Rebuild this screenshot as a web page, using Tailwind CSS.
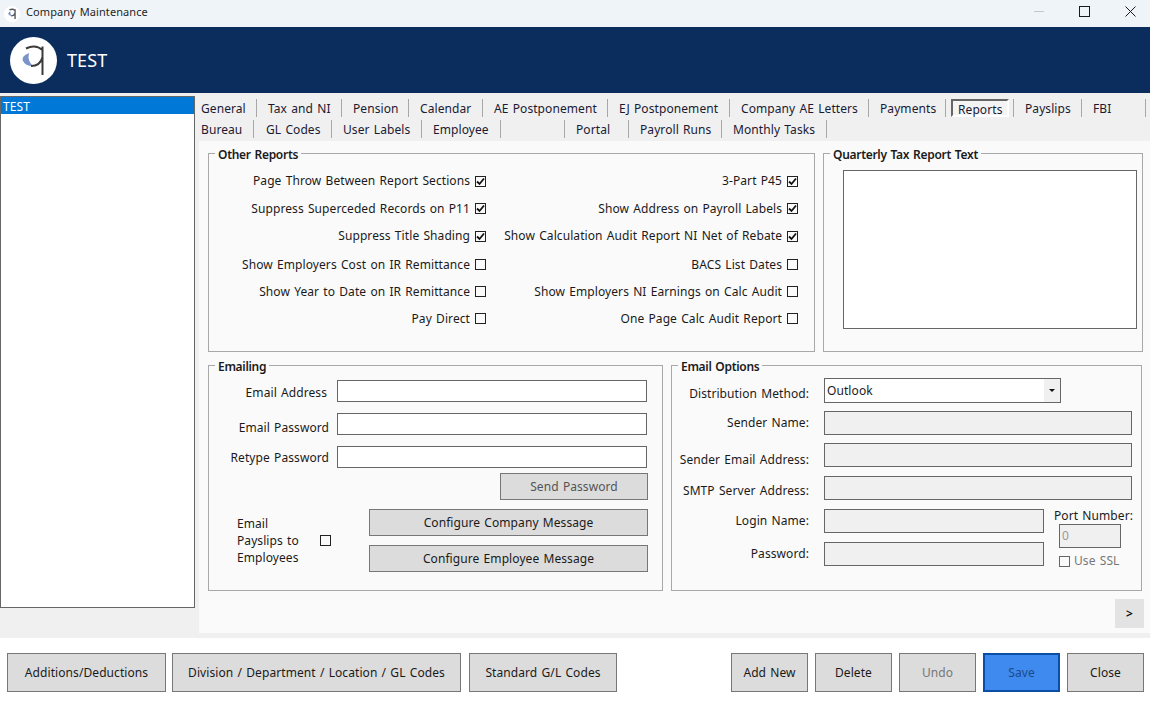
<!DOCTYPE html>
<html>
<head>
<meta charset="utf-8">
<title>Company Maintenance</title>
<script src="https://cdn.jsdelivr.net/npm/@tailwindcss/browser@4"></script>
</head>
<body class="w-[1150px] h-[706px] overflow-hidden bg-white font-['Noto_Sans',sans-serif] text-[12px] tracking-[0.08px] [word-spacing:1px] text-[#1a1a1a]">

<!-- title bar -->
<div class="h-[27px] bg-[#eff4f9] flex items-center">
  <svg class="ml-[4px] w-[16px] h-[16px]" viewBox="0 0 47 47">
    <circle cx="23.5" cy="23.5" r="23.5" fill="#fff"/>
    <path d="M19 16 Q11 19 13 24 Q15 29 23 29 Q17 24 19 16Z" fill="#7b93c8"/>
    <path d="M16 11.5 C22 8.5 28 9 32.5 13 M32.5 9.5 V38 M32.5 20 C31 26 27 29 21 29" fill="none" stroke="#55565c" stroke-width="4"/>
  </svg>
  <span class="ml-[6px] pb-[2px] text-[11px] text-[#1f1f1f]">Company Maintenance</span>
  <div class="ml-auto pb-[5px] flex items-center">
    <div class="w-[10px] h-px bg-[#c4c8cc] mr-[35px]"></div>
    <div class="w-[11px] h-[11px] border border-[#1a1a1a] mr-[35px]"></div>
    <svg class="w-[11px] h-[11px] mr-[14px]" viewBox="0 0 11 11"><path d="M0.5 0.5 L10.5 10.5 M10.5 0.5 L0.5 10.5" stroke="#1a1a1a" fill="none"/></svg>
  </div>
</div>

<!-- header -->
<div class="h-[66px] bg-[#0a2d5e] flex items-center">
  <svg class="ml-[10px] w-[47px] h-[47px]" viewBox="0 0 47 47">
    <circle cx="23.5" cy="23.5" r="23.5" fill="#fff"/>
    <path d="M19 16 Q11 19 13 24 Q15 29 23 29 Q17 24 19 16Z" fill="#7b93c8"/>
    <path d="M16 11.5 C22 8.5 28 9 32.5 13 M32.5 9.5 V38 M32.5 20 C31 26 27 29 21 29" fill="none" stroke="#3d3a3a" stroke-width="2"/>
  </svg>
  <span class="ml-[10px] text-[18px] text-white">TEST</span>
</div>

<!-- main -->
<div class="h-[545px] bg-[#f0f0f0] flex">
  <div class="w-[195px] h-[512px] mt-[3px] bg-white border border-[#666]">
    <div class="h-[17px] leading-[19px] bg-[#0078d7] text-white pl-[2px]">TEST</div>
  </div>

  <div class="ml-[4px] w-[951px]">
    <!-- tabs -->
    <div class="h-[48px] pt-[6px] text-[#1a1a33]">
      <div class="flex h-[21px]">
        <div class="w-[58px] h-[18px] leading-[19px] pl-[2px] border-r border-[#a8a8a8]">General</div>
        <div class="w-[85px] h-[18px] leading-[19px] pl-[11px] border-r border-[#a8a8a8]">Tax and NI</div>
        <div class="w-[67px] h-[18px] leading-[19px] pl-[11px] border-r border-[#a8a8a8]">Pension</div>
        <div class="w-[74px] h-[18px] leading-[19px] pl-[11px] border-r border-[#a8a8a8]">Calendar</div>
        <div class="w-[125px] h-[18px] leading-[19px] pl-[11px] border-r border-[#a8a8a8]">AE Postponement</div>
        <div class="w-[122px] h-[18px] leading-[19px] pl-[11px] border-r border-[#a8a8a8]">EJ Postponement</div>
        <div class="w-[139px] h-[18px] leading-[19px] pl-[11px] border-r border-[#a8a8a8]">Company AE Letters</div>
        <div class="w-[77px] h-[18px] leading-[19px] pl-[11px] border-r border-[#a8a8a8]">Payments</div>
        <div class="w-[68px] h-[18px] pl-[5px] border-r border-[#a8a8a8]">
          <div class="w-[58px] h-[18px] leading-[17px] pl-[5px] border-2 border-t-[#666] border-l-[#666] border-r-white border-b-white bg-[#f4f4f4]">Reports</div>
        </div>
        <div class="w-[68px] h-[18px] leading-[19px] pl-[11px] border-r border-[#a8a8a8]">Payslips</div>
        <div class="w-[64px] h-[18px] leading-[19px] pl-[11px] border-r border-[#a8a8a8]">FBI</div>
      </div>
      <div class="flex">
        <div class="w-[55px] h-[18px] leading-[19px] pl-[2px] border-r border-[#a8a8a8]">Bureau</div>
        <div class="w-[78px] h-[18px] leading-[19px] pl-[12px] border-r border-[#a8a8a8]">GL Codes</div>
        <div class="w-[90px] h-[18px] leading-[19px] pl-[11px] border-r border-[#a8a8a8]">User Labels</div>
        <div class="w-[79px] h-[18px] leading-[19px] pl-[11px] border-r border-[#a8a8a8]">Employee</div>
        <div class="w-[64px] h-[18px] border-r border-[#a8a8a8]"></div>
        <div class="w-[64px] h-[18px] leading-[19px] pl-[11px] border-r border-[#a8a8a8]">Portal</div>
        <div class="w-[93px] h-[18px] leading-[19px] pl-[11px] border-r border-[#a8a8a8]">Payroll Runs</div>
        <div class="w-[105px] h-[18px] leading-[19px] pl-[11px] border-r border-[#a8a8a8]">Monthly Tasks</div>
      </div>
    </div>

    <!-- panel -->
    <div class="h-[492px] bg-[#fafafa] pl-[9px] pt-[12px] relative">
      <div class="flex">
        <!-- other reports -->
        <div class="relative w-[607px] h-[199px] border border-[#a8a8a8] flex pt-[13px]">
          <div class="absolute left-[6px] top-[-7px] px-[3px] bg-[#fafafa] font-semibold leading-[16px] tracking-[-0.3px]">Other Reports</div>
          <div class="w-[277px] flex flex-col items-end">
            <div class="flex items-center h-[28px] gap-[5px]">Page Throw Between Report Sections<span class="w-[11px] h-[11px] border border-[#222] flex items-center justify-center"><svg class="w-[9px] h-[9px]" viewBox="0 0 9 9"><path d="M1 4.5 L3.5 7 L8 1.5" fill="none" stroke="#111" stroke-width="1.8"/></svg></span></div>
            <div class="flex items-center h-[27px] gap-[5px]">Suppress Superceded Records on P11<span class="w-[11px] h-[11px] border border-[#222] flex items-center justify-center"><svg class="w-[9px] h-[9px]" viewBox="0 0 9 9"><path d="M1 4.5 L3.5 7 L8 1.5" fill="none" stroke="#111" stroke-width="1.8"/></svg></span></div>
            <div class="flex items-center h-[29px] pb-[1px] gap-[5px]">Suppress Title Shading<span class="w-[11px] h-[11px] border border-[#222] flex items-center justify-center"><svg class="w-[9px] h-[9px]" viewBox="0 0 9 9"><path d="M1 4.5 L3.5 7 L8 1.5" fill="none" stroke="#111" stroke-width="1.8"/></svg></span></div>
            <div class="flex items-center h-[27px] gap-[5px]">Show Employers Cost on IR Remittance<span class="w-[11px] h-[11px] border border-[#222]"></span></div>
            <div class="flex items-center h-[27px] gap-[5px]">Show Year to Date on IR Remittance<span class="w-[11px] h-[11px] border border-[#222]"></span></div>
            <div class="flex items-center h-[27px] gap-[5px]">Pay Direct<span class="w-[11px] h-[11px] border border-[#222]"></span></div>
          </div>
          <div class="w-[312px] flex flex-col items-end">
            <div class="flex items-center h-[28px] gap-[5px]">3-Part P45<span class="w-[11px] h-[11px] border border-[#222] flex items-center justify-center"><svg class="w-[9px] h-[9px]" viewBox="0 0 9 9"><path d="M1 4.5 L3.5 7 L8 1.5" fill="none" stroke="#111" stroke-width="1.8"/></svg></span></div>
            <div class="flex items-center h-[27px] gap-[5px]">Show Address on Payroll Labels<span class="w-[11px] h-[11px] border border-[#222] flex items-center justify-center"><svg class="w-[9px] h-[9px]" viewBox="0 0 9 9"><path d="M1 4.5 L3.5 7 L8 1.5" fill="none" stroke="#111" stroke-width="1.8"/></svg></span></div>
            <div class="flex items-center h-[29px] pb-[1px] gap-[5px]">Show Calculation Audit Report NI Net of Rebate<span class="w-[11px] h-[11px] border border-[#222] flex items-center justify-center"><svg class="w-[9px] h-[9px]" viewBox="0 0 9 9"><path d="M1 4.5 L3.5 7 L8 1.5" fill="none" stroke="#111" stroke-width="1.8"/></svg></span></div>
            <div class="flex items-center h-[27px] gap-[5px]">BACS List Dates<span class="w-[11px] h-[11px] border border-[#222]"></span></div>
            <div class="flex items-center h-[27px] gap-[5px]">Show Employers NI Earnings on Calc Audit<span class="w-[11px] h-[11px] border border-[#222]"></span></div>
            <div class="flex items-center h-[27px] gap-[5px]">One Page Calc Audit Report<span class="w-[11px] h-[11px] border border-[#222]"></span></div>
          </div>
        </div>
        <!-- quarterly -->
        <div class="relative ml-[8px] w-[320px] h-[199px] border border-[#a8a8a8] pl-[19px] pt-[16px]">
          <div class="absolute left-[6px] top-[-7px] px-[3px] bg-[#fafafa] font-semibold leading-[16px] tracking-[-0.3px]">Quarterly Tax Report Text</div>
          <div class="w-[294px] h-[159px] bg-white border border-[#666]"></div>
        </div>
      </div>

      <div class="flex mt-[13px]">
        <!-- emailing -->
        <div class="relative w-[455px] h-[226px] border border-[#a8a8a8]">
          <div class="absolute left-[6px] top-[-7px] px-[3px] bg-[#fafafa] font-semibold leading-[16px] tracking-[-0.3px]">Emailing</div>
          <div class="flex flex-col items-end pr-[15px] pt-[14px]">
            <div class="flex items-center h-[22px]"><span class="mr-[10px] pt-[4px]">Email Address</span><div class="w-[310px] h-[22px] bg-white border border-[#666]"></div></div>
            <div class="flex items-center h-[22px] mt-[11px]"><span class="mr-[8px] pt-[8px]">Email Password</span><div class="w-[310px] h-[22px] bg-white border border-[#666]"></div></div>
            <div class="flex items-center h-[22px] mt-[11px]"><span class="mr-[8px] pt-[2px]">Retype Password</span><div class="w-[310px] h-[22px] bg-white border border-[#666]"></div></div>
            <div class="w-[148px] h-[27px] mt-[5px] mr-[-1px] leading-[25px] text-center text-[#555] bg-[#dcdcdc] border border-[#777]">Send Password</div>
          </div>
          <div class="flex mt-[9px]">
            <div class="ml-[28px] w-[70px] leading-[17px] mt-[6px]">Email<br>Payslips to<br>Employees</div>
            <div class="w-[11px] h-[11px] border border-[#222] ml-[13px] mt-[26px]"></div>
            <div class="ml-[38px]">
              <div class="w-[279px] h-[27px] leading-[25px] text-center bg-[#dcdcdc] border border-[#777]">Configure Company Message</div>
              <div class="w-[279px] h-[27px] leading-[25px] text-center bg-[#dcdcdc] border border-[#777] mt-[9px]">Configure Employee Message</div>
            </div>
          </div>
        </div>
        <!-- email options -->
        <div class="relative ml-[8px] w-[471px] h-[226px] border border-[#a8a8a8]">
          <div class="absolute left-[6px] top-[-7px] px-[3px] bg-[#fafafa] font-semibold leading-[16px] tracking-[-0.3px]">Email Options</div>
          <div class="pt-[12px]">
            <div class="flex items-center h-[25px]">
              <div class="w-[137px] text-right pt-[6px]">Distribution Method:</div>
              <div class="ml-[15px] w-[237px] h-[25px] bg-white border border-[#666] flex items-center pl-[2px]">Outlook
                <div class="ml-auto w-[16px] h-[23px] bg-[#f0f0f0] flex items-center justify-center"><div class="border-x-[3px] border-x-transparent border-t-[3px] border-t-[#111]"></div></div>
              </div>
            </div>
            <div class="flex items-center h-[24px] mt-[8px]">
              <div class="w-[137px] text-right">Sender Name:</div>
              <div class="ml-[15px] w-[308px] h-[24px] bg-[#f0f0f0] border border-[#666]"></div>
            </div>
            <div class="flex items-center h-[24px] mt-[8px]">
              <div class="w-[137px] text-right pt-[10px]">Sender Email Address:</div>
              <div class="ml-[15px] w-[308px] h-[24px] bg-[#f0f0f0] border border-[#666]"></div>
            </div>
            <div class="flex items-center h-[24px] mt-[9px]">
              <div class="w-[137px] text-right pt-[6px]">SMTP Server Address:</div>
              <div class="ml-[15px] w-[308px] h-[24px] bg-[#f0f0f0] border border-[#666]"></div>
            </div>
            <div class="flex mt-[9px]">
              <div class="w-[372px]">
                <div class="flex items-center h-[24px]">
                  <div class="w-[137px] text-right">Login Name:</div>
                  <div class="ml-[15px] w-[220px] h-[24px] bg-[#f0f0f0] border border-[#666]"></div>
                </div>
                <div class="flex items-center h-[24px] mt-[9px]">
                  <div class="w-[137px] text-right">Password:</div>
                  <div class="ml-[15px] w-[220px] h-[24px] bg-[#f0f0f0] border border-[#666]"></div>
                </div>
              </div>
              <div class="ml-[10px] mt-[-1px]">
                <div class="h-[16px] leading-[16px]">Port Number:</div>
                <div class="ml-[5px] w-[62px] h-[24px] leading-[22px] pl-[2px] text-[#999] bg-[#f0f0f0] border border-[#666]">0</div>
                <div class="ml-[5px] mt-[5px] h-[16px] flex items-center gap-[4px] text-[#777]"><span class="w-[11px] h-[11px] border border-[#666]"></span>Use SSL</div>
              </div>
            </div>
          </div>
        </div>
      </div>

      <div class="absolute right-[6px] top-[458px] w-[29px] h-[29px] bg-[#e3e3e3] flex items-center justify-center font-semibold text-[#111]">&gt;</div>
    </div>
  </div>
</div>

<!-- footer -->
<div class="h-[68px] bg-white flex pt-[15px] pl-[7px]">
  <div class="w-[159px] h-[39px] leading-[37px] text-center bg-[#dcdcdc] border border-[#777]">Additions/Deductions</div>
  <div class="ml-[6px] w-[289px] h-[39px] leading-[37px] text-center bg-[#dcdcdc] border border-[#777]">Division / Department / Location / GL Codes</div>
  <div class="ml-[8px] w-[148px] h-[39px] leading-[37px] text-center bg-[#dcdcdc] border border-[#777]">Standard G/L Codes</div>
  <div class="ml-[114px] w-[77px] h-[39px] leading-[37px] text-center bg-[#dcdcdc] border border-[#777]">Add New</div>
  <div class="ml-[7px] w-[77px] h-[39px] leading-[37px] text-center bg-[#dcdcdc] border border-[#777]">Delete</div>
  <div class="ml-[7px] w-[77px] h-[39px] leading-[37px] text-center text-[#777] bg-[#dcdcdc] border border-[#777]">Undo</div>
  <div class="ml-[7px] w-[77px] h-[39px] leading-[35px] text-center text-[#1c4a8a] bg-[#3f8aee] border-2 border-[#0b4ea6]">Save</div>
  <div class="ml-[7px] w-[77px] h-[39px] leading-[37px] text-center bg-[#dcdcdc] border border-[#777]">Close</div>
</div>
</body>
</html>
